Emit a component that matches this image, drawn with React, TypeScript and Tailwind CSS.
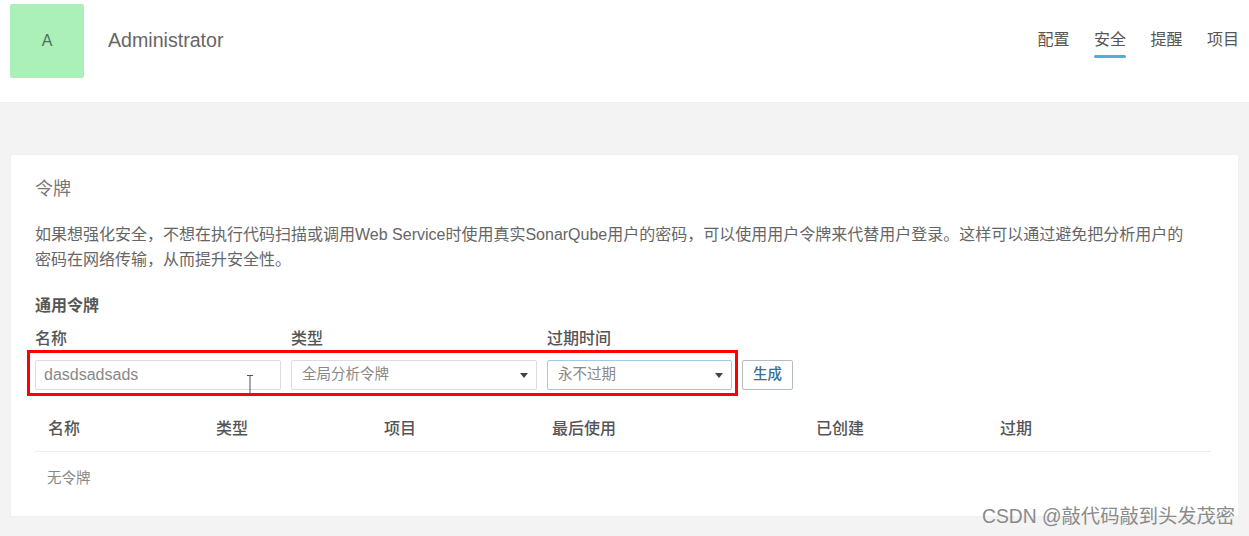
const font = "font-['Liberation_Sans','Noto_Sans_CJK_SC',sans-serif]";

const navItems = [
  { label: "配置", active: false },
  { label: "安全", active: true },
  { label: "提醒", active: false },
  { label: "项目", active: false },
];

const columns = [
  { label: "名称", width: "w-[168px]" },
  { label: "类型", width: "w-[168px]" },
  { label: "项目", width: "w-[168px]" },
  { label: "最后使用", width: "w-[264px]" },
  { label: "已创建", width: "w-[184px]" },
  { label: "过期", width: "w-[100px]" },
];

function Caret() {
  return <span className="w-0 h-0 border-x-[4px] border-x-transparent border-t-[5px] border-t-[#444]" />;
}

export default function App() {
  return (
    <div className={`${font} relative w-[1249px] h-[536px] overflow-hidden bg-[#f3f3f4] text-[#555]`}>
      <header className="flex h-[103px] items-start justify-between bg-white border-b border-[#eeeeee] pl-[10px] pr-[10px]">
        <div className="flex items-center pt-[4px]">
          <div className="flex h-[74px] w-[74px] items-center justify-center rounded-[2px] bg-[#abf0b9] text-[16px] text-[#4f6f57]">
            A
          </div>
          <span className="ml-[24px] text-[19.6px] text-[#666]">Administrator</span>
        </div>
        <nav className="flex gap-[24.5px] pt-[28px]">
          {navItems.map((item) => (
            <div key={item.label} className="flex flex-col">
              <span className="text-[16px] leading-[24px] text-[#555]">{item.label}</span>
              <span className={`mt-[3px] h-[3px] rounded-full ${item.active ? "bg-[#5aa9d6]" : "bg-transparent"}`} />
            </div>
          ))}
        </nav>
      </header>

      <main className="mx-[10px] mt-[51px] h-[363px] rounded-[2px] bg-white pl-[24px] pr-[27px] pt-[21px] border border-[#f0f0f0]">
        <h2 className="text-[18px] leading-[26px] text-[#777]">令牌</h2>
        <p className="mt-[20px] text-[16px] leading-[25px] text-[#666]">
          如果想强化安全，不想在执行代码扫描或调用Web Service时使用真实SonarQube用户的密码，可以使用用户令牌来代替用户登录。这样可以通过避免把分析用户的
          <br />
          密码在网络传输，从而提升安全性。
        </p>
        <h3 className="mt-[22px] text-[16px] leading-[24px] font-bold text-[#555]">通用令牌</h3>

        <div className="mt-[9px] flex gap-[10px]">
          <div className="flex w-[246px] flex-col">
            <label className="text-[16px] leading-[24px] font-medium text-[#555]">名称</label>
            <div className="mt-[9px] flex h-[30px] items-center rounded-[2px] border border-[#ddd] px-[8px] text-[16px] text-[#888]">
              dasdsadsads
            </div>
          </div>
          <div className="flex w-[246px] flex-col">
            <label className="text-[16px] leading-[24px] font-medium text-[#555]">类型</label>
            <div className="mt-[9px] flex h-[30px] items-center justify-between rounded-[2px] border border-[#ddd] pl-[10px] pr-[8px] text-[14.5px] text-[#888]">
              全局分析令牌
              <Caret />
            </div>
          </div>
          <div className="flex w-[185px] flex-col">
            <label className="text-[16px] leading-[24px] font-medium text-[#555]">过期时间</label>
            <div className="mt-[9px] flex h-[30px] items-center justify-between rounded-[2px] border border-[#a0cbe8] pl-[10px] pr-[8px] text-[14.5px] text-[#888]">
              永不过期
              <Caret />
            </div>
          </div>
          <div className="flex flex-col justify-end">
            <button className="h-[30px] w-[51px] rounded-[2px] border border-[#b4bcc2] bg-white text-[14.5px] font-medium text-[#3a6f94]">
              生成
            </button>
          </div>
        </div>

        <div className="mt-[17px] flex h-[45px] items-center border-b border-[#eeeeee] pl-[13px]">
          {columns.map((col) => (
            <span key={col.label} className={`${col.width} text-[16px] font-medium text-[#555]`}>
              {col.label}
            </span>
          ))}
        </div>
        <div className="pl-[12px] pt-[15px] text-[14.5px] leading-[22px] text-[#888]">无令牌</div>
      </main>

      {/* annotation + cursor from the screenshot */}
      <div className="absolute left-[27px] top-[350px] h-[46px] w-[711px] border-[3px] border-[#ff0000]" />
      <svg className="absolute left-[246px] top-[375px]" width="8" height="20" viewBox="0 0 8 20" fill="none" stroke="#555" strokeWidth="1">
        <path d="M1 .5h6M4 .5v18M1 18.5h6" />
      </svg>
      <span className="absolute left-[982px] top-[505px] text-[19.3px] leading-[24px] text-[#8a8a8a]">
        CSDN @敲代码敲到头发茂密
      </span>
    </div>
  );
}
